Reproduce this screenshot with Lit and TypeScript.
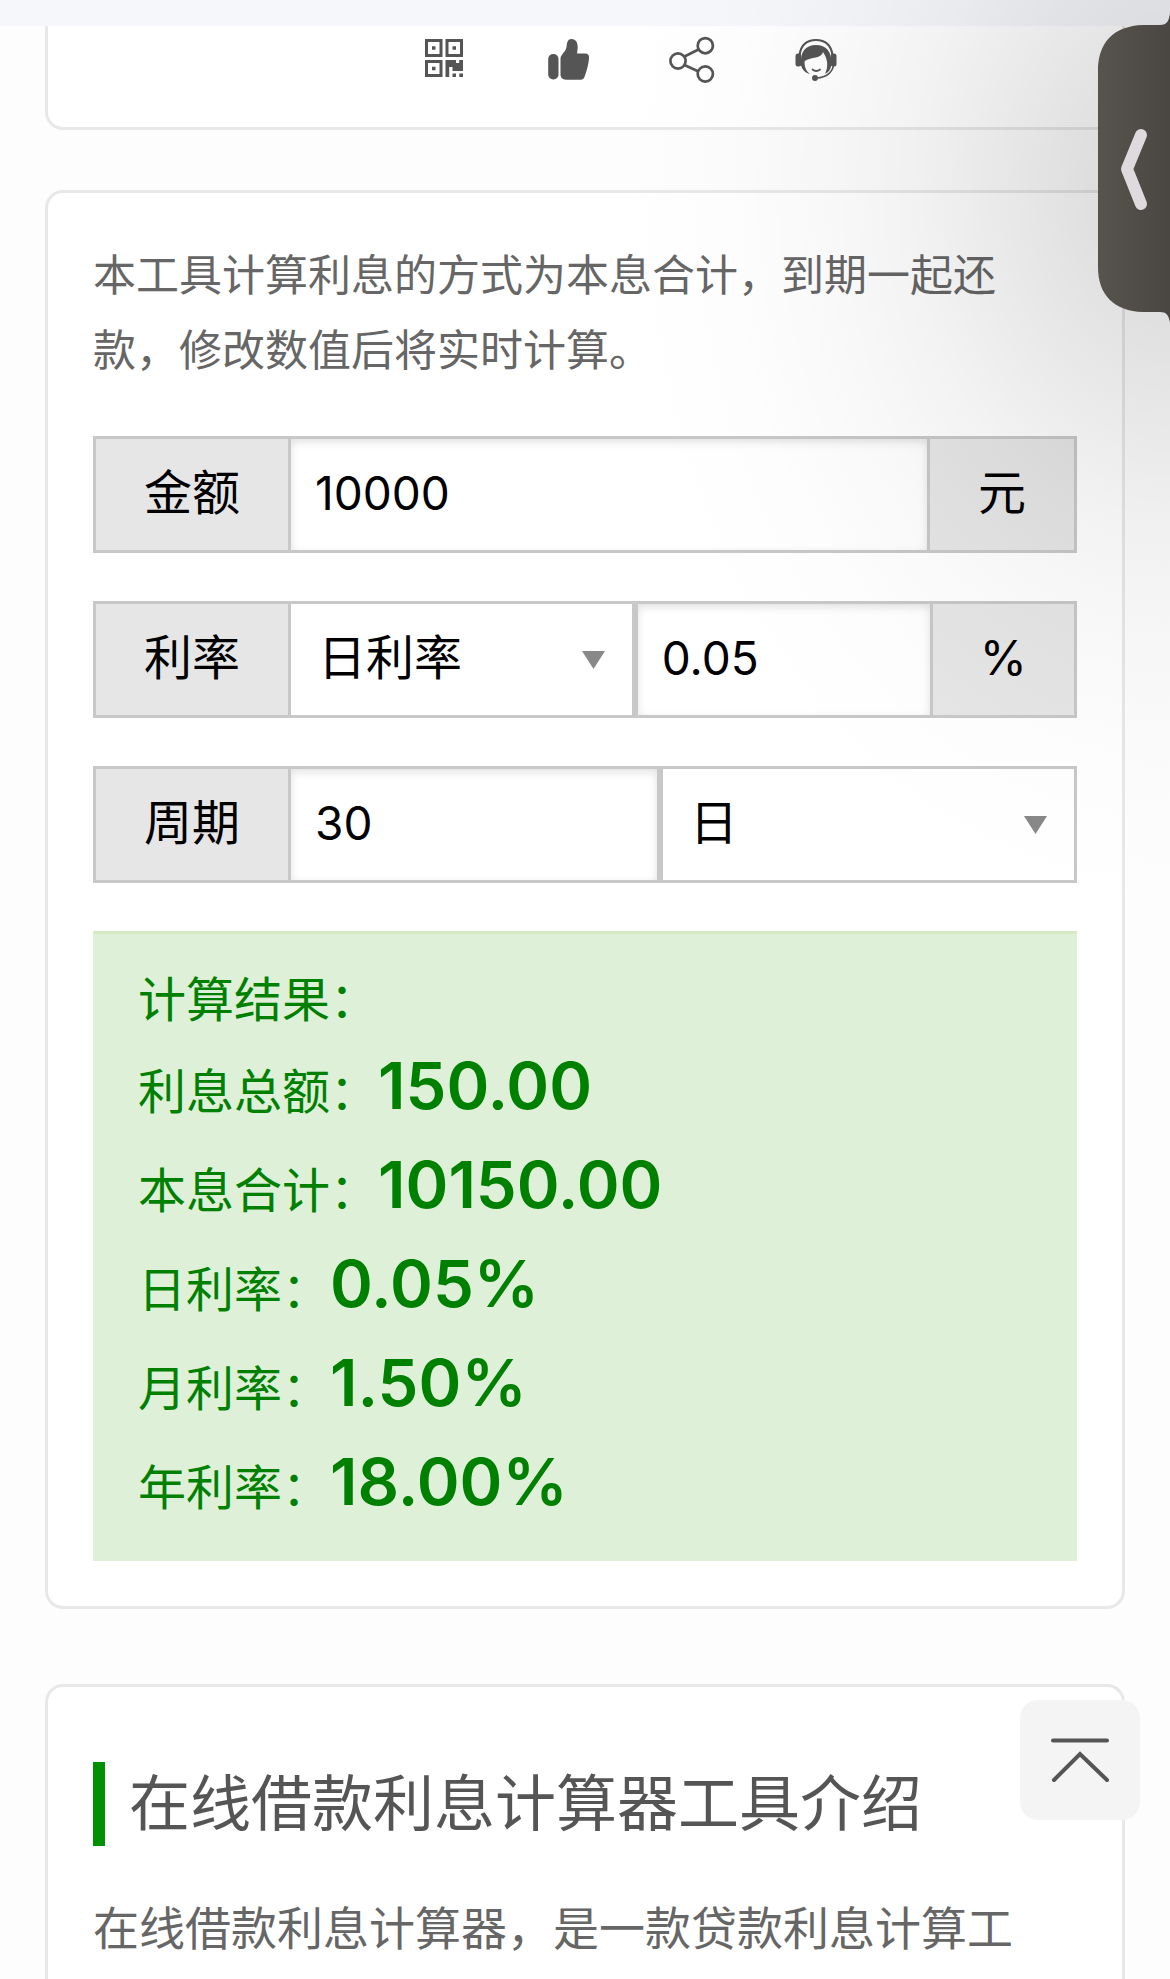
import { LitElement, html, css, svg } from "lit";
import { customElement, state } from "lit/decorators.js";

const icons = {
  qr: svg`<path fill-rule="evenodd" d="M5 4h17.5v18H5zM8 7v12h11.5V7zM25.5 4H43v18H25.5zM28.500 7v12H40V7zM5 25h17.5v17H5zM8 28v11h11.5V28z"/>
    <path d="M12 11.3h3.5v3.5H12zM32.5 11.3H36v3.5h-3.5zM12 31.8h3.5v3.5H12zM25.5 25H36v3h3.2v-3H43v11H32.5v-4h-3.3v10h-3.7zM32.5 38.5H36V42h-3.5zM39.3 38.5H43V42h-3.7z"/>`,
  like: svg`<rect x="4.200" y="19" width="10.300" height="25.500" rx="5"/>
    <path d="M16.500 24C16.500 20 20 18 21.500 15S22.500 10 23.200 7.500C23.800 5 25.500 4 27.500 4C32 4 33.800 8 33.700 12.500L33.100 18.500H41C44 18.500 45.500 20.500 45 23.500C44.500 29 43 35 41 40.500C40.200 43.300 39 44.700 36.500 44.700H22C18.500 44.700 16.500 42.500 16.500 39.500Z"/>`,
  share: svg`<g fill="none" stroke="currentColor" stroke-width="2.700"><circle cx="10" cy="26" r="7.600"/><circle cx="37.300" cy="10.700" r="7.600"/><circle cx="37.300" cy="39" r="7.600"/><path d="M16.500 21.500L30.500 14.500M16.500 30L30.500 36.500"/></g>`,
  service: svg`<path d="M9 30C8 16 14 10 24 10S40 16 39.500 30C38.500 34.500 36.500 37.500 33 39C36.500 32 36 24 31 17C30 23.500 19 22 12.700 26C12 31 14 36 18 39C13 38 10 34.500 9 30Z"/>
    <path fill="none" stroke="currentColor" stroke-width="2.200" d="M7.500 20C9 10 15 5 24 5S39 10 40.500 20"/>
    <rect x="3.500" y="18.500" width="5.800" height="13" rx="2.500"/><rect x="38.700" y="18.500" width="5.800" height="13" rx="2.500"/>
    <path fill="none" stroke="currentColor" stroke-width="1.700" stroke-linecap="round" d="M41.500 30C40.500 37.500 34 42.500 25 43M20.500 34.500Q24 37.500 28 34.500"/>
    <circle cx="23" cy="43" r="3"/>`,
};

const actions = [
  { label: "二维码", icon: icons.qr },
  { label: "点赞", icon: icons.like },
  { label: "分享", icon: icons.share },
  { label: "客服", icon: icons.service },
];

const units = [
  { name: "日", days: 1 },
  { name: "月", days: 30 },
  { name: "年", days: 360 },
];

@customElement("app-root")
export class AppRoot extends LitElement {
  @state() private amount = "10000";
  @state() private rate = "0.05";
  @state() private rateUnit = 0;
  @state() private period = "30";
  @state() private periodUnit = 0;

  static styles = css`
    :host {
      display: flex;
      flex-direction: column;
      position: relative;
      min-height: 100vh;
      overflow: hidden;
      background: #fdfdfd;
      color: #555;
      font-family: Inter, "Noto Sans CJK SC", sans-serif;
    }
    * { box-sizing: border-box; }
    .band { height: 26px; background: #f5f7fb; }
    main { flex: 1; display: flex; flex-direction: column; padding: 0 45px; }
    .card { background: #fff; border: 3px solid #e8e8e8; border-radius: 18px; padding: 45px; }
    .toolbar {
      display: flex;
      justify-content: center;
      gap: 76px;
      padding: 9px 0 44px 90px;
      border-top: 0;
      border-radius: 0 0 18px 18px;
    }
    .calc { margin-top: 60px; }
    .intro {
      flex: 1;
      margin-top: 75px;
      padding: 75px 45px 8px;
      border-bottom: 0;
      border-radius: 18px 18px 0 0;
    }
    button { border: 0; padding: 0; background: none; color: inherit; font: inherit; cursor: pointer; }
    .action { width: 48px; height: 48px; }
    .action svg { display: block; width: 48px; height: 48px; fill: currentColor; }
    p { margin: 0; }
    .note { font-size: 43px; line-height: 75px; color: #666; }
    form { display: flex; flex-direction: column; gap: 48px; margin: 48px 0; }
    .row {
      display: flex;
      height: 117px;
      border: 3px solid #c8c8c8;
      background: #c8c8c8;
      gap: 3px;
      font-size: 48px;
      line-height: 72px;
      color: #000;
    }
    .row label, .addon {
      display: flex;
      align-items: center;
      justify-content: center;
      background: #e6e6e6;
      padding: 0 48px 3px;
    }
    .addon.percent { padding: 0 47px 3px; }
    input, select {
      width: 100%;
      min-width: 0;
      border: 0;
      border-radius: 0;
      margin: 0;
      outline: 0;
      background: #fff;
      color: #000;
      font: inherit;
      appearance: none;
    }
    input { flex: 1 1 0; padding: 0 24px 3px; font-size: 46px; box-shadow: inset 0 3px 9px rgba(0, 0, 0, 0.12); }
    .pick { display: grid; align-items: center; min-width: 0; }
    .pick select, .pick svg { grid-area: 1 / 1; }
    .pick select { height: 100%; padding: 0 60px 3px 27px; }
    .pick svg { justify-self: end; width: 23px; height: 18px; margin-right: 27px; pointer-events: none; fill: #888; }
    .pair { display: grid; flex: 1; gap: 6px; min-width: 0; }
    .rate-pair { grid-template-columns: 7fr 6fr; }
    .period-pair { grid-template-columns: 8fr 9fr; }
    .result {
      border-top: 3px solid #d6e9c6;
      background: #dff0d8;
      color: #008000;
      padding: 30px 45px;
      font-size: 48px;
      line-height: 72px;
    }
    .result dl { margin: 0; }
    .result dl div { display: flex; align-items: baseline; height: 99px; line-height: 99px; }
    dd { margin: 0; font-size: 65px; font-weight: 600; }
    h2 {
      margin: 0;
      padding-left: 24px;
      border-left: 12px solid #009000;
      font-size: 61px;
      line-height: 84px;
      font-weight: 400;
      white-space: nowrap;
    }
    .about { margin-top: 40px; font-size: 46px; line-height: 84px; color: #666; }
    .shade {
      position: absolute;
      inset: 0;
      pointer-events: none;
      background: radial-gradient(
        560px 740px at 100% 190px,
        rgba(0, 0, 0, 0.14) 0%,
        rgba(0, 0, 0, 0.12) 15%,
        rgba(0, 0, 0, 0.085) 30%,
        rgba(0, 0, 0, 0.052) 45%,
        rgba(0, 0, 0, 0.027) 60%,
        rgba(0, 0, 0, 0.008) 80%,
        rgba(0, 0, 0, 0) 100%
      );
    }
    .drawer { position: absolute; top: 10px; right: 0; width: 72px; height: 316px; }
    .drawer svg { display: block; }
    .top {
      position: absolute;
      top: 1700px;
      right: 30px;
      width: 120px;
      height: 120px;
      border-radius: 18px;
      background: #f4f4f4;
    }
    .top svg { display: block; fill: none; stroke: #555; stroke-width: 4; stroke-linecap: round; }
  `;

  private get daily() {
    return (Number(this.rate) || 0) / units[this.rateUnit].days;
  }

  private renderPick(id: string, label: string, suffix: string, value: number, set: (n: number) => void) {
    return html`<div class="pick">
      <select id=${id} aria-label=${label} @change=${(e: Event) => set((e.target as HTMLSelectElement).selectedIndex)}>
        ${units.map((u, i) => html`<option ?selected=${i === value}>${u.name}${suffix}</option>`)}
      </select>
      <svg viewBox="0 0 23 18" aria-hidden="true"><path d="M0 0H23L11.5 18Z" /></svg>
    </div>`;
  }

  private renderInput(id: string, value: string, set: (v: string) => void) {
    return html`<input id=${id} type="text" inputmode="decimal" .value=${value}
      @input=${(e: Event) => set((e.target as HTMLInputElement).value)} />`;
  }

  render() {
    const amount = Number(this.amount) || 0;
    const days = (Number(this.period) || 0) * units[this.periodUnit].days;
    const interest = (amount * this.daily * days) / 100;
    const results = [
      ["利息总额：", interest.toFixed(2)],
      ["本息合计：", (amount + interest).toFixed(2)],
      ["日利率：", this.daily.toFixed(2) + "%"],
      ["月利率：", (this.daily * 30).toFixed(2) + "%"],
      ["年利率：", (this.daily * 360).toFixed(2) + "%"],
    ];
    return html`
      <div class="band"></div>
      <main>
        <div class="card toolbar">
          ${actions.map((a) => html`<button class="action" type="button" aria-label=${a.label}>
            <svg viewBox="0 0 48 48" aria-hidden="true">${a.icon}</svg>
          </button>`)}
        </div>

        <section class="card calc">
          <p class="note">本工具计算利息的方式为本息合计，到期一起还款，修改数值后将实时计算。</p>
          <form @submit=${(e: Event) => e.preventDefault()}>
            <div class="row">
              <label for="amount">金额</label>
              ${this.renderInput("amount", this.amount, (v) => (this.amount = v))}
              <span class="addon">元</span>
            </div>
            <div class="row">
              <label for="rate">利率</label>
              <div class="pair rate-pair">
                ${this.renderPick("rate-unit", "利率类型", "利率", this.rateUnit, (n) => (this.rateUnit = n))}
                ${this.renderInput("rate", this.rate, (v) => (this.rate = v))}
              </div>
              <span class="addon percent">%</span>
            </div>
            <div class="row">
              <label for="period">周期</label>
              <div class="pair period-pair">
                ${this.renderInput("period", this.period, (v) => (this.period = v))}
                ${this.renderPick("period-unit", "周期单位", "", this.periodUnit, (n) => (this.periodUnit = n))}
              </div>
            </div>
          </form>
          <div class="result">
            <p>计算结果：</p>
            <dl>${results.map(([k, v]) => html`<div><dt>${k}</dt><dd>${v}</dd></div>`)}</dl>
          </div>
        </section>

        <section class="card intro">
          <h2>在线借款利息计算器工具介绍</h2>
          <p class="about">在线借款利息计算器，是一款贷款利息计算工</p>
        </section>
      </main>

      <div class="shade"></div>
      <button class="drawer" type="button" aria-label="展开侧栏">
        <svg width="72" height="316" viewBox="0 0 72 316" aria-hidden="true">
          <defs>
            <linearGradient id="drawer-fill" x1="0" y1="0" x2="1" y2="0">
              <stop offset="0" stop-color="#57534d" />
              <stop offset="1" stop-color="#4a4641" />
            </linearGradient>
          </defs>
          <path fill="url(#drawer-fill)" d="M72 3C71 12 68 15 62 15H45C16 16 0 32 0 61V257C0 285 16 301 45 302H62C68 302 71 305 72 313Z" />
          <path fill="none" stroke="#dedadd" stroke-width="12" stroke-linecap="round" stroke-linejoin="round" d="M43 125L29 159L43 194" />
        </svg>
      </button>
      <button class="top" type="button" aria-label="返回顶部" @click=${() => window.scrollTo({ top: 0 })}>
        <svg width="120" height="120" viewBox="0 0 120 120" aria-hidden="true">
          <path d="M33 40.5H87M34 80L60 54L87 80" />
        </svg>
      </button>
    `;
  }
}
